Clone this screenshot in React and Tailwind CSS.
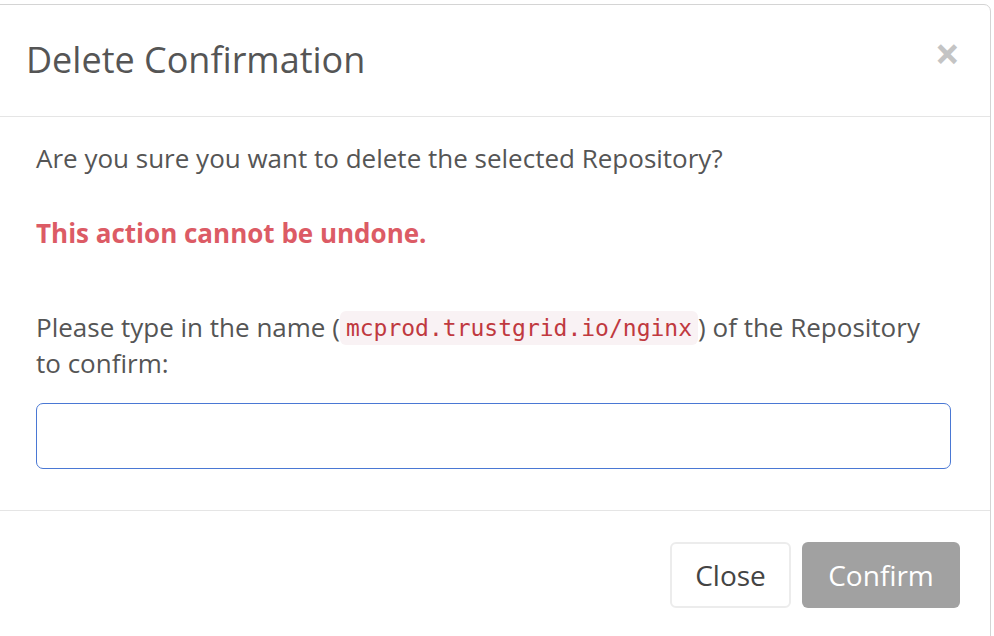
import React from 'react'

export default function App(){
  return (
    <div className="w-[994px] h-[636px] bg-white overflow-hidden pt-1" style={{ fontFamily: '"Open Sans", sans-serif' }}>
      <div className="ml-[-8px] w-[999px] h-[680px] bg-white border border-[#d4d4d4] rounded-[7px] text-[#555]">
        <div className="flex items-center justify-between h-[112px] pl-[33px] pr-[30px] border-b border-[#e5e5e5]">
          <h4 className="text-[36px] leading-none text-[#555] -mt-[2px]">Delete Confirmation</h4>
          <button className="text-[44px] font-bold leading-none text-[#c4c4c4] -mt-[16px]">×</button>
        </div>
        <div className="pl-[43px] pr-[48px] pt-[23px] pb-[41px] text-[26px] leading-[36px]">
          <p>Are you sure you want to delete the selected Repository?</p>
          <p className="mt-[39px] font-bold text-[#dc5b65]">This action cannot be undone.</p>
          <p className="mt-[58px]">
            Please type in the name (<code className="bg-[#f9f2f4] text-[#c0393f] rounded-[6px] px-[6px] py-[4px] text-[23px] leading-none align-[1px]" style={{ fontFamily: '"DejaVu Sans Mono", monospace' }}>mcprod.trustgrid.io/nginx</code>) of the Repository to confirm:
          </p>
          <input className="mt-[22px] block w-[915px] h-[66px] border-[1.5px] border-[#4a78d4] rounded-[7px] outline-none" />
        </div>
        <div className="flex justify-end gap-[11px] pr-[30px] pt-[31px] border-t border-[#e5e5e5]">
          <button className="h-[66px] w-[121px] border-2 border-[#ececec] rounded-[6px] bg-white text-[28px] text-[#444]">Close</button>
          <button className="h-[66px] w-[158px] rounded-[6px] bg-[#a1a1a1] text-[28px] text-white">Confirm</button>
        </div>
      </div>
    </div>
  )
}
